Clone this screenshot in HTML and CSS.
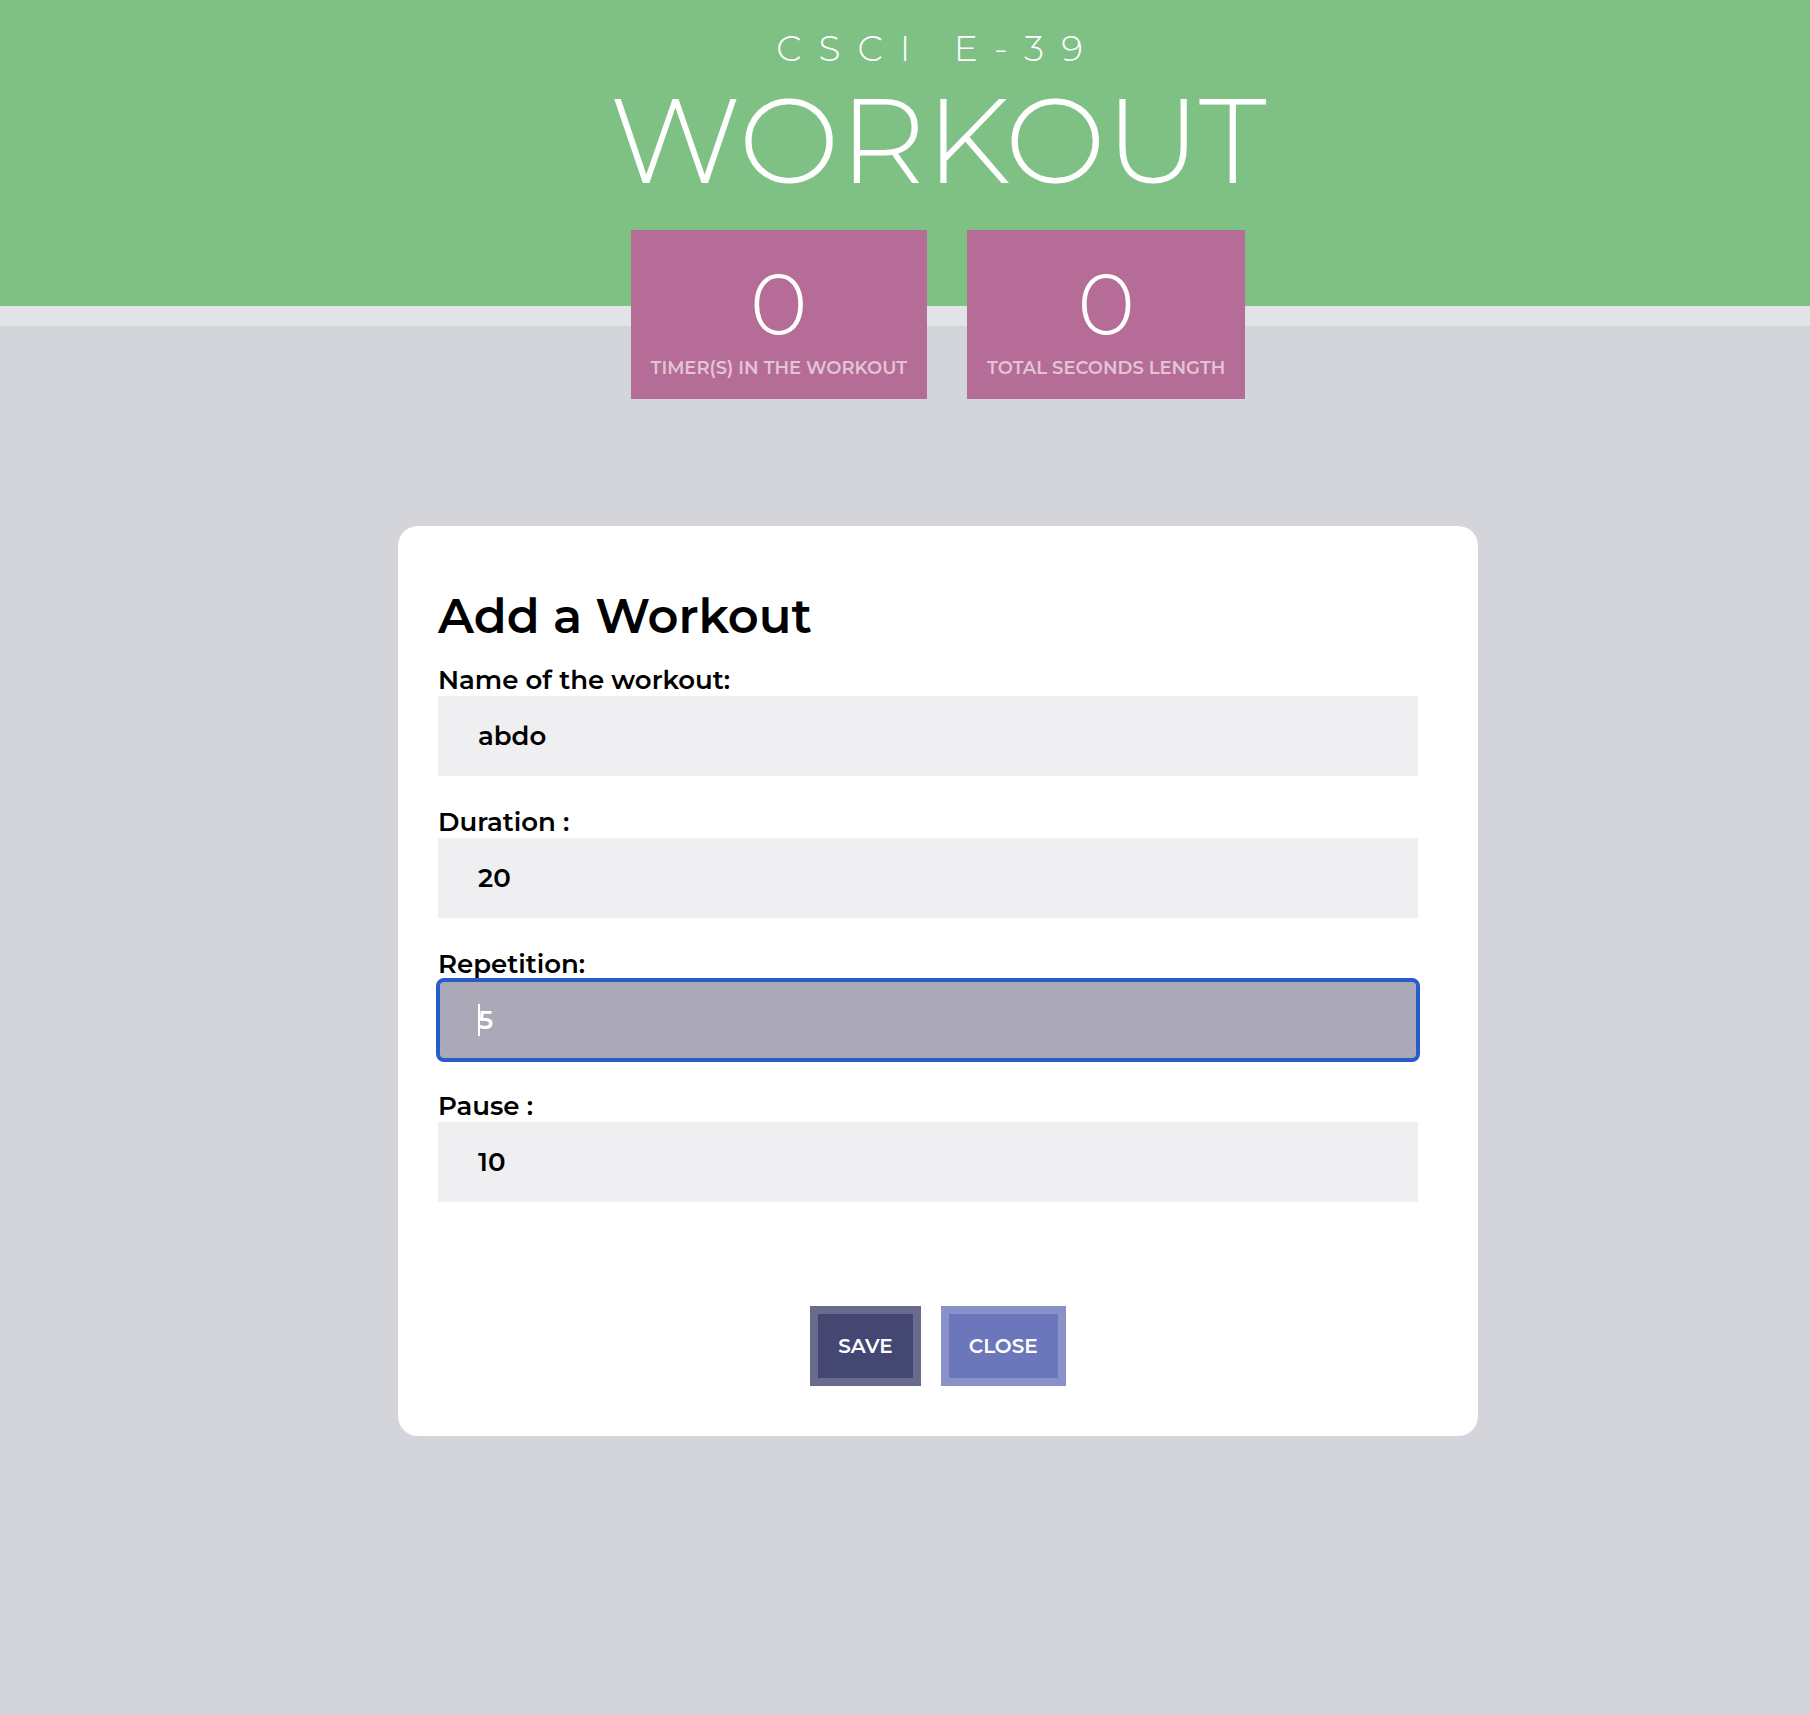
FILE: index.html
```html
<!DOCTYPE html>
<html lang="en">
<head>
  <meta charset="utf-8">
  <meta name="viewport" content="width=device-width, initial-scale=1">
  <title>CSCI E-39 Workout</title>
  <link rel="stylesheet" href="styles.css">
</head>
<body>
  <header class="header">
    <p class="header__course">CSCI E-39</p>
    <h1 class="header__title">WORKOUT</h1>
    <div class="stats">
      <section class="stat">
        <span class="stat__value">0</span>
        <span class="stat__label">TIMER(S) IN THE WORKOUT</span>
      </section>
      <section class="stat">
        <span class="stat__value">0</span>
        <span class="stat__label">TOTAL SECONDS LENGTH</span>
      </section>
    </div>
  </header>

  <main class="main">
    <form class="panel">
      <h2 class="panel__title">Add a Workout</h2>
      <div class="field">
        <label class="field__label" for="name">Name of the workout:</label>
        <input class="field__input" id="name" type="text" value="abdo">
      </div>
      <div class="field">
        <label class="field__label" for="duration">Duration :</label>
        <input class="field__input" id="duration" type="text" value="20">
      </div>
      <div class="field">
        <label class="field__label" for="repetition">Repetition:</label>
        <input class="field__input field__input--active" id="repetition" type="text" value="5">
      </div>
      <div class="field">
        <label class="field__label" for="pause">Pause :</label>
        <input class="field__input" id="pause" type="text" value="10">
      </div>
      <div class="actions">
        <button class="button button--save" type="button">SAVE</button>
        <button class="button button--close" type="button">CLOSE</button>
      </div>
    </form>
  </main>
</body>
</html>
```

FILE: styles.css
```css
* {
  box-sizing: border-box;
}

body {
  margin: 0;
  min-height: 100vh;
  background: #d4d5da;
  color: #000;
  font-family: "Montserrat", "Inter", sans-serif;
  font-weight: 600;
}

.header {
  display: flex;
  flex-direction: column;
  align-items: center;
  padding: 24px 0 0 66px;
  border-bottom: 20px solid #e2e3e7;
  background: #7fc084;
  color: #fff;
}

.header__course {
  margin: 0;
  font-size: 36px;
  font-weight: 300;
  line-height: 48px;
  letter-spacing: 17px;
}

.header__title {
  margin: 0;
  font-size: 120px;
  font-weight: 300;
  line-height: 136px;
}

.stats {
  display: flex;
  gap: 40px;
  margin: 22px 0 -93px;
}

.stat {
  display: flex;
  flex-direction: column;
  align-items: center;
  padding: 24px 20px 17px;
  background: #b56c96;
}

.stat__value {
  font-size: 88px;
  font-weight: 300;
  line-height: 100px;
}

.stat__label {
  color: #e1c4d5;
  font-size: 18px;
  line-height: 28px;
  white-space: nowrap;
}

.main {
  display: flex;
  justify-content: center;
  padding: 200px 0 80px 66px;
}

.panel {
  width: 100%;
  max-width: 1080px;
  padding: 60px 60px 50px 40px;
  border-radius: 20px;
  background: #fff;
}

.panel__title {
  margin: 0 0 18px;
  font-size: 48px;
  font-weight: 600;
  line-height: 60px;
}

.field {
  margin-bottom: 30px;
}

.field__label {
  display: block;
  font-size: 26px;
  line-height: 32px;
}

.field__input {
  display: block;
  width: 100%;
  height: 80px;
  padding: 0 40px;
  border: 0;
  border-radius: 0;
  background: #efeff1;
  color: #000;
  font: inherit;
  font-size: 26px;
}

.field__input:focus,
.field__input--active {
  border-radius: 6px;
  outline: 4px solid #275dc8;
  outline-offset: -2px;
  box-shadow: 0 0 0 4px #fff;
  background: linear-gradient(#fff, #fff) 40px center / 2px 32px no-repeat #aba9b7;
  color: #fff;
  caret-color: transparent;
}

.actions {
  display: flex;
  justify-content: center;
  gap: 20px;
  margin: 104px -20px 0 0;
}

.button {
  height: 80px;
  padding: 0 20px;
  border: 8px solid;
  border-radius: 0;
  color: #fff;
  font: inherit;
  font-size: 20px;
  cursor: pointer;
}

.button--save {
  border-color: #686b8c;
  background: #434771;
}

.button--close {
  border-color: #8a91c8;
  background: #6c76bb;
}
```
